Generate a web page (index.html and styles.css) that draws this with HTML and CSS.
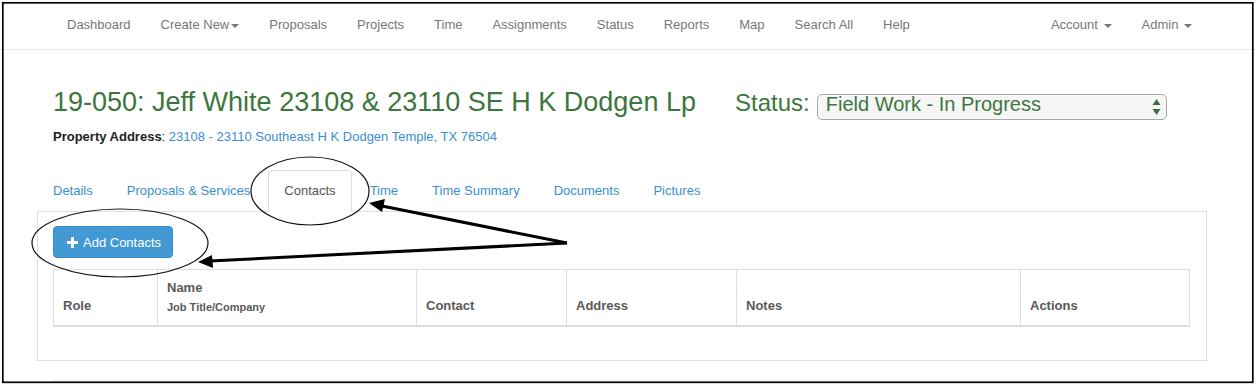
FILE: index.html
```html
<!DOCTYPE html>
<html lang="en">
<head>
    <meta charset="UTF-8">
    <title>19-050: Jeff White - Contacts</title>
    <link rel="stylesheet" href="styles.css">
</head>
<body>
    <nav class="navbar">
        <div class="container nav-inner">
            <ul class="nav-links">
                <li><a href="#">Dashboard</a></li>
                <li><a href="#">Create New<span class="caret"></span></a></li>
                <li><a href="#">Proposals</a></li>
                <li><a href="#">Projects</a></li>
                <li><a href="#">Time</a></li>
                <li><a href="#">Assignments</a></li>
                <li><a href="#">Status</a></li>
                <li><a href="#">Reports</a></li>
                <li><a href="#">Map</a></li>
                <li><a href="#">Search All</a></li>
                <li><a href="#">Help</a></li>
            </ul>
            <ul class="nav-links nav-right">
                <li><a href="#">Account <span class="caret"></span></a></li>
                <li><a href="#">Admin <span class="caret"></span></a></li>
            </ul>
        </div>
    </nav>

    <div class="container page">
        <div class="header-row">
            <h1 class="project-title">19-050: Jeff White 23108 &amp; 23110 SE H K Dodgen Lp</h1>
            <div class="status-group">
                <span class="status-label">Status:</span>
                <div class="status-select">
                    <span>Field Work - In Progress</span>
                    <svg class="select-arrows" width="9" height="18" viewBox="0 0 9 18">
                        <path d="M4.5 1 L8.5 7 L0.5 7 Z" fill="#3c6e3d"/>
                        <path d="M4.5 17 L8.5 11 L0.5 11 Z" fill="#3c6e3d"/>
                    </svg>
                </div>
            </div>
        </div>
        <p class="property-address"><strong>Property Address</strong>: <a href="#">23108 - 23110 Southeast H K Dodgen Temple, TX 76504</a></p>

        <ul class="tabs">
            <li><a href="#">Details</a></li>
            <li><a href="#">Proposals &amp; Services</a></li>
            <li class="active"><a href="#">Contacts</a></li>
            <li><a href="#">Time</a></li>
            <li><a href="#">Time Summary</a></li>
            <li><a href="#">Documents</a></li>
            <li><a href="#">Pictures</a></li>
        </ul>

        <div class="tab-content">
            <button class="add-btn">
                <svg class="plus" width="11" height="11" viewBox="0 0 11 11">
                    <path d="M4 0 H7 V4 H11 V7 H7 V11 H4 V7 H0 V4 H4 Z" fill="#fff"/>
                </svg>
                Add Contacts
            </button>
            <table class="contacts-table">
                <thead>
                    <tr>
                        <th class="col-role">Role</th>
                        <th class="col-name">Name<small>Job Title/Company</small></th>
                        <th class="col-contact">Contact</th>
                        <th class="col-address">Address</th>
                        <th class="col-notes">Notes</th>
                        <th class="col-actions">Actions</th>
                    </tr>
                </thead>
            </table>
        </div>
        <div class="next-section"></div>
    </div>

    <!-- screenshot annotations -->
    <svg class="annotations" width="1256" height="389" viewBox="0 0 1256 389">
        <rect x="2.8" y="2.8" width="1250" height="379.5" fill="none" stroke="#000" stroke-width="1.7"/>
        <ellipse cx="310" cy="191" rx="59" ry="34" fill="none" stroke="#111" stroke-width="1.2"/>
        <ellipse cx="120" cy="243" rx="88" ry="34" fill="none" stroke="#111" stroke-width="1.2"/>
        <line x1="567" y1="243" x2="382" y2="206" stroke="#000" stroke-width="3"/>
        <path d="M369 203 L385 199 L382 212 Z" fill="#000"/>
        <line x1="567" y1="243" x2="210" y2="261" stroke="#000" stroke-width="3"/>
        <path d="M198 262 L212 255 L213 268 Z" fill="#000"/>
    </svg>
</body>
</html>
```

FILE: styles.css
```css
body {
    margin: 0;
    font-family: "Liberation Sans", Arial, sans-serif;
    font-size: 13px;
    color: #333;
    background: #fff;
    position: relative;
    width: 1256px;
    height: 389px;
    overflow: hidden;
}

a {
    text-decoration: none;
}

.container {
    width: 1170px;
    margin-left: 37px;
}

.navbar {
    height: 49px;
    border-bottom: 1px solid #e7e7e7;
    background: #fff;
}

.nav-inner {
    display: flex;
    justify-content: space-between;
    padding: 0 15px;
    box-sizing: border-box;
}

.nav-links {
    display: flex;
    list-style: none;
    margin: 0;
    padding: 0;
}

.nav-right {
    margin-right: -15px;
}

.nav-links a {
    display: block;
    padding: 0 15px;
    line-height: 49px;
    color: #777;
}

.caret {
    display: inline-block;
    width: 0;
    height: 0;
    margin-left: 2px;
    vertical-align: middle;
    border-top: 4px solid #777;
    border-left: 4px solid transparent;
    border-right: 4px solid transparent;
}

.page {
    padding-top: 38px;
}

.header-row {
    display: flex;
    align-items: baseline;
    padding-left: 16px;
}

.project-title {
    flex: 0 0 682px;
    margin: 0;
    font-size: 27px;
    font-weight: normal;
    line-height: 1.1;
    color: #3c763d;
    white-space: nowrap;
}

.status-group {
    display: flex;
    align-items: baseline;
}

.status-label {
    font-size: 24px;
    color: #3c763d;
    margin-right: 7px;
}

.status-select {
    width: 350px;
    height: 26px;
    box-sizing: border-box;
    border: 1px solid #a9a9a9;
    border-radius: 5px;
    background: #f6f6f6;
    padding-left: 8px;
    font-size: 20px;
    line-height: 19px;
    color: #3c763d;
    position: relative;
}

.select-arrows {
    position: absolute;
    right: 5px;
    top: 3px;
}

.property-address {
    margin: 8px 0 0;
    padding-left: 16px;
    font-size: 13px;
    line-height: 18px;
    color: #222;
}

.property-address a {
    color: #3b8fd0;
}

.tabs {
    display: flex;
    list-style: none;
    margin: 24px 0 0;
    padding: 0;
    position: relative;
    z-index: 1;
}

.tabs li {
    margin-right: 2px;
    margin-bottom: -1px;
}

.tabs a {
    display: block;
    padding: 11px 15px;
    line-height: 18px;
    color: #3b8fd0;
    border: 1px solid transparent;
    border-bottom: none;
    border-radius: 4px 4px 0 0;
}

.tabs li.active a {
    color: #555;
    background: #fff;
    border-color: #ddd;
    padding-bottom: 12px;
}

.tab-content {
    border: 1px solid #ddd;
    padding: 14px 15px 0;
    height: 150px;
    box-sizing: border-box;
}

.add-btn {
    display: flex;
    align-items: center;
    width: 120px;
    height: 32px;
    padding: 0 0 0 13px;
    background: #4299d3;
    border: 1px solid #3a8cc5;
    border-radius: 4px;
    color: #fff;
    font-family: "Liberation Sans", Arial, sans-serif;
    font-size: 13px;
}

.plus {
    margin-right: 5px;
}

.contacts-table {
    margin-top: 11px;
    width: 1137px;
    border-collapse: collapse;
    border: 1px solid #ddd;
}

.contacts-table th {
    text-align: left;
    vertical-align: bottom;
    padding: 8px 9px 11px;
    height: 36px;
    font-size: 13px;
    color: #5a5a5a;
    border-left: 1px solid #ddd;
    border-bottom: 2px solid #ddd;
    line-height: 17px;
}

.contacts-table th small {
    display: block;
    font-size: 11px;
    margin-top: 4px;
    line-height: 14px;
}

.col-role { width: 85px; }
.col-name { width: 240px; }
.col-contact { width: 131px; }
.col-address { width: 151px; }
.col-notes { width: 265px; }

.next-section {
    margin: 19px 0 0 15px;
    width: 1110px;
    border-top: 1px solid #eee;
}

.annotations {
    position: absolute;
    left: 0;
    top: 0;
    pointer-events: none;
}
```
